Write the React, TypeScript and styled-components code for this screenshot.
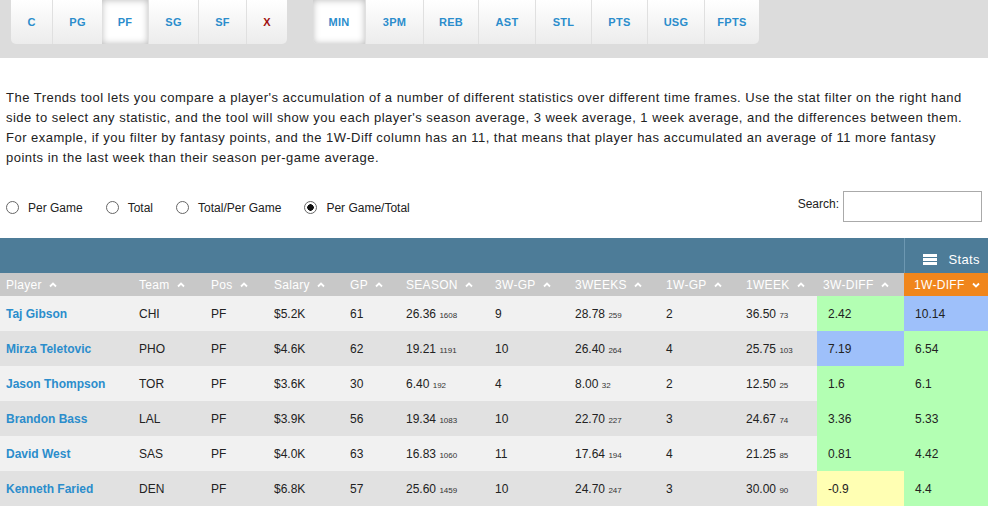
import React from 'react';
import styled, { createGlobalStyle, css } from 'styled-components';

const GlobalStyle = createGlobalStyle`
  body {
    margin: 0;
    background: #fff;
    font-family: 'Liberation Sans', Arial, sans-serif;
    color: #222;
  }
`;

const positions = [
  { label: 'C', width: 41 },
  { label: 'PG', width: 49 },
  { label: 'PF', width: 46, active: true },
  { label: 'SG', width: 49 },
  { label: 'SF', width: 47 },
  { label: 'X', width: 40, danger: true },
];

const stats = [
  { label: 'MIN', width: 52, active: true },
  { label: '3PM', width: 57 },
  { label: 'REB', width: 54 },
  { label: 'AST', width: 56 },
  { label: 'STL', width: 55 },
  { label: 'PTS', width: 55 },
  { label: 'USG', width: 56 },
  { label: 'FPTS', width: 54 },
];

const columns = [
  { label: 'Player', width: 133 },
  { label: 'Team', width: 72 },
  { label: 'Pos', width: 63 },
  { label: 'Salary', width: 76 },
  { label: 'GP', width: 56 },
  { label: 'SEASON', width: 89 },
  { label: '3W-GP', width: 80 },
  { label: '3WEEKS', width: 91 },
  { label: '1W-GP', width: 80 },
  { label: '1WEEK', width: 77 },
  { label: '3W-DIFF', width: 87 },
  { label: '1W-DIFF', width: 84, sorted: true },
];

type Tone = 'green' | 'blue' | 'yellow';

interface Player {
  name: string;
  team: string;
  salary: string;
  gp: number;
  season: [string, string];
  gp3: number;
  weeks3: [string, string];
  gp1: number;
  week1: [string, string];
  diff3: [string, Tone];
  diff1: [string, Tone];
}

const players: Player[] = [
  { name: 'Taj Gibson', team: 'CHI', salary: '$5.2K', gp: 61, season: ['26.36', '1608'], gp3: 9, weeks3: ['28.78', '259'], gp1: 2, week1: ['36.50', '73'], diff3: ['2.42', 'green'], diff1: ['10.14', 'blue'] },
  { name: 'Mirza Teletovic', team: 'PHO', salary: '$4.6K', gp: 62, season: ['19.21', '1191'], gp3: 10, weeks3: ['26.40', '264'], gp1: 4, week1: ['25.75', '103'], diff3: ['7.19', 'blue'], diff1: ['6.54', 'green'] },
  { name: 'Jason Thompson', team: 'TOR', salary: '$3.6K', gp: 30, season: ['6.40', '192'], gp3: 4, weeks3: ['8.00', '32'], gp1: 2, week1: ['12.50', '25'], diff3: ['1.6', 'green'], diff1: ['6.1', 'green'] },
  { name: 'Brandon Bass', team: 'LAL', salary: '$3.9K', gp: 56, season: ['19.34', '1083'], gp3: 10, weeks3: ['22.70', '227'], gp1: 3, week1: ['24.67', '74'], diff3: ['3.36', 'green'], diff1: ['5.33', 'green'] },
  { name: 'David West', team: 'SAS', salary: '$4.0K', gp: 63, season: ['16.83', '1060'], gp3: 11, weeks3: ['17.64', '194'], gp1: 4, week1: ['21.25', '85'], diff3: ['0.81', 'green'], diff1: ['4.42', 'green'] },
  { name: 'Kenneth Faried', team: 'DEN', salary: '$6.8K', gp: 57, season: ['25.60', '1459'], gp3: 10, weeks3: ['24.70', '247'], gp1: 3, week1: ['30.00', '90'], diff3: ['-0.9', 'yellow'], diff1: ['4.4', 'green'] },
];

const toneColors: Record<Tone, string> = {
  green: '#b3ffb3',
  blue: '#9ec0fa',
  yellow: '#ffffb3',
};

function Caret({ down }: { down?: boolean }) {
  return (
    <CaretSvg width="8" height="6" viewBox="0 0 8 6">
      <polyline
        points={down ? '1,1.5 4,4.5 7,1.5' : '1,4.5 4,1.5 7,4.5'}
        fill="none"
        stroke="#fff"
        strokeWidth="1.8"
      />
    </CaretSvg>
  );
}

function Stat({ value }: { value: [string, string] }) {
  return (
    <>
      {value[0]} <Small>{value[1]}</Small>
    </>
  );
}

function App() {
  return (
    <>
      <GlobalStyle />
      <TopBar>
        <ButtonGroup>
          {positions.map((p) => (
            <FilterButton key={p.label} $width={p.width} $active={p.active} $danger={p.danger}>
              {p.label}
            </FilterButton>
          ))}
        </ButtonGroup>
        <ButtonGroup>
          {stats.map((s) => (
            <FilterButton key={s.label} $width={s.width} $active={s.active}>
              {s.label}
            </FilterButton>
          ))}
        </ButtonGroup>
      </TopBar>

      <Intro>
        The Trends tool lets you compare a player's accumulation of a number of different statistics over
        different time frames. Use the stat filter on the right hand side to select any statistic, and the
        tool will show you each player's season average, 3 week average, 1 week average, and the differences
        between them. For example, if you filter by fantasy points, and the 1W-Diff column has an 11, that
        means that player has accumulated an average of 11 more fantasy points in the last week than their
        season per-game average.
      </Intro>

      <Controls>
        <RadioGroup>
          {['Per Game', 'Total', 'Total/Per Game', 'Per Game/Total'].map((label, i) => (
            <RadioOption key={label}>
              <RadioDot $checked={i === 3} />
              {label}
            </RadioOption>
          ))}
        </RadioGroup>
        <SearchLabel>
          Search:
          <SearchInput type="text" />
        </SearchLabel>
      </Controls>

      <Table>
        <colgroup>
          {columns.map((c) => (
            <col key={c.label} style={{ width: c.width }} />
          ))}
        </colgroup>
        <thead>
          <TitleRow>
            <th colSpan={11} />
            <StatsCell>
              <StatsToggle>
                <MenuIcon>
                  <span />
                  <span />
                  <span />
                </MenuIcon>
                Stats
              </StatsToggle>
            </StatsCell>
          </TitleRow>
          <HeadRow>
            {columns.map((c) => (
              <HeadCell key={c.label} $sorted={c.sorted}>
                {c.label}
                <Caret down={c.sorted} />
              </HeadCell>
            ))}
          </HeadRow>
        </thead>
        <tbody>
          {players.map((p) => (
            <Row key={p.name}>
              <Cell>
                <PlayerLink>{p.name}</PlayerLink>
              </Cell>
              <Cell>{p.team}</Cell>
              <Cell>PF</Cell>
              <Cell>{p.salary}</Cell>
              <Cell>{p.gp}</Cell>
              <Cell>
                <Stat value={p.season} />
              </Cell>
              <Cell>{p.gp3}</Cell>
              <Cell>
                <Stat value={p.weeks3} />
              </Cell>
              <Cell>{p.gp1}</Cell>
              <Cell>
                <Stat value={p.week1} />
              </Cell>
              <Cell $tone={p.diff3[1]}>{p.diff3[0]}</Cell>
              <Cell $tone={p.diff1[1]}>{p.diff1[0]}</Cell>
            </Row>
          ))}
        </tbody>
      </Table>
    </>
  );
}

export default App;

const TopBar = styled.div`
  display: flex;
  gap: 26px;
  height: 58px;
  padding-left: 11px;
  background: #dcdcdc;
`;

const ButtonGroup = styled.div`
  display: flex;
  height: 44px;
  border-radius: 0 0 5px 5px;
  overflow: hidden;
  background: linear-gradient(#ffffff, #ececec);
`;

const FilterButton = styled.div<{ $width: number; $active?: boolean; $danger?: boolean }>`
  width: ${(p) => p.$width}px;
  display: flex;
  align-items: center;
  justify-content: center;
  font-size: 11px;
  font-weight: bold;
  letter-spacing: 0.3px;
  color: ${(p) => (p.$danger ? '#a01010' : '#2b8dcc')};
  border-left: 1px solid #e0e0e0;
  &:first-child {
    border-left: none;
  }
  ${(p) =>
    p.$active &&
    css`
      background: #fff;
      box-shadow: inset 0 0 7px rgba(0, 0, 0, 0.28);
      border-left: none;
    `}
`;

const Intro = styled.p`
  margin: 30px 0 0;
  padding: 0 14px 0 6px;
  font-size: 13px;
  line-height: 20px;
  letter-spacing: 0.48px;
  color: #222;
`;

const Controls = styled.div`
  display: flex;
  justify-content: space-between;
  align-items: center;
  height: 32px;
  margin-top: 22px;
  padding: 0 6px 0 6px;
`;

const RadioGroup = styled.div`
  display: flex;
  gap: 23px;
  padding-top: 4px;
`;

const RadioOption = styled.label`
  display: flex;
  align-items: center;
  gap: 9px;
  font-size: 12px;
  color: #222;
`;

const RadioDot = styled.span<{ $checked?: boolean }>`
  width: 11px;
  height: 11px;
  border: 1px solid #666;
  border-radius: 50%;
  background: #fff;
  position: relative;
  top: -1px;
  ${(p) =>
    p.$checked &&
    css`
      background: radial-gradient(circle, #111 0 3px, #fff 3.5px);
    `}
`;

const SearchLabel = styled.label`
  display: flex;
  align-items: center;
  gap: 4px;
  font-size: 12px;
  color: #222;
  align-self: flex-start;
  margin-top: -4px;
  > input {
    margin-top: 5px;
  }
`;

const SearchInput = styled.input`
  width: 137px;
  height: 29px;
  border: 1px solid #aaa;
  padding: 0;
  box-sizing: content-box;
  outline: none;
`;

const Table = styled.table`
  margin-top: 16px;
  width: 988px;
  border-collapse: collapse;
  table-layout: fixed;
  font-size: 12px;
`;

const TitleRow = styled.tr`
  height: 35px;
  background: #4d7c98;
`;

const StatsCell = styled.th`
  border-left: 1px solid #6d98b2;
  color: #fff;
  font-size: 13px;
  font-weight: normal;
  text-align: left;
  padding: 2px 0 0 18px;
  vertical-align: middle;
`;

const StatsToggle = styled.span`
  display: inline-flex;
  align-items: center;
  gap: 12px;
  letter-spacing: 0.3px;
  line-height: 16px;
`;

const MenuIcon = styled.span`
  display: inline-flex;
  flex-direction: column;
  gap: 1px;
  width: 14px;
  margin-top: -2px;
  span {
    display: block;
    height: 3px;
    background: #fff;
  }
`;

const HeadRow = styled.tr`
  height: 23px;
  background: #c8c8c8;
`;

const HeadCell = styled.th<{ $sorted?: boolean }>`
  text-align: left;
  font-weight: normal;
  letter-spacing: 0.3px;
  color: #fff;
  white-space: nowrap;
  background: ${(p) => (p.$sorted ? '#f0861c' : 'transparent')};
  padding: 0 0 0 ${(p) => (p.$sorted ? '10px' : '6px')};
`;

const CaretSvg = styled.svg`
  margin-left: 7px;
  vertical-align: 1px;
`;

const Row = styled.tr`
  height: 35px;
  background: #f1f1f1;
  &:nth-child(even) {
    background: #e1e1e1;
  }
`;

const Cell = styled.td<{ $tone?: Tone }>`
  vertical-align: middle;
  color: #222;
  white-space: nowrap;
  background: ${(p) => (p.$tone ? toneColors[p.$tone] : 'transparent')};
  padding: 0 0 0 ${(p) => (p.$tone ? '11px' : '6px')};
`;

const PlayerLink = styled.a`
  color: #2b8dcc;
  font-weight: bold;
  cursor: pointer;
`;

const Small = styled.span`
  font-size: 8px;
  color: #333;
`;
